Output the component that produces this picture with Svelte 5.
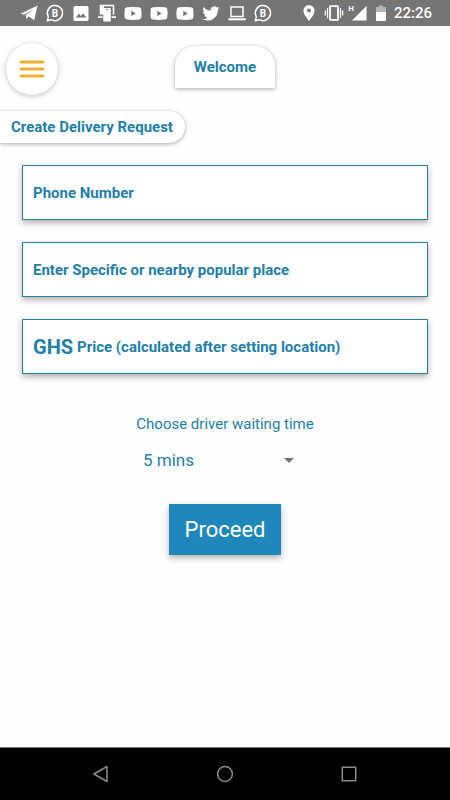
<script lang="ts">
	let phone = $state('');
	let place = $state('');
	let price = $state('');
	let waiting = $state('5');

	const waitingTimes = ['5', '10', '15', '20', '30'];
	const notifications = ['telegram', 'business', 'image', 'cast', 'video', 'video', 'video', 'twitter', 'laptop', 'business'];
</script>

<div class="screen">
	<div class="status">
		<div class="notifications">
			{#each notifications as icon}
				<svg viewBox="0 0 18 18" aria-hidden="true">
					{#if icon === 'telegram'}
						<path d="M0.5 9.8 17.5 1.5 14.3 16.3 8.7 12.3 6.5 15 5.8 11.2 13.5 4.8 4.3 10.8Z" fill="#fff" />
					{:else if icon === 'business'}
						<path d="M1.2 16.8 2.4 12.9A7.6 7.6 0 1 1 5.3 15.7Z" fill="none" stroke="#fff" stroke-width="1.5" stroke-linejoin="round" />
						<text x="9" y="12.8" class="letter">B</text>
					{:else if icon === 'image'}
						<path fill-rule="evenodd" d="M3 2h12a1.5 1.5 0 0 1 1.5 1.5v12A1.5 1.5 0 0 1 15 17H3a1.5 1.5 0 0 1-1.5-1.5v-12A1.5 1.5 0 0 1 3 2ZM3.8 13.5h10.4L11.2 9.2 9 12 6.8 9.8Z" fill="#fff" />
					{:else if icon === 'cast'}
						<path d="M2.5 10.5V1.5h13v9" fill="none" stroke="#fff" stroke-width="1.6" />
						<path d="M2.5 1.5H6v9H2.5ZM0 12.2h4.4V14H0ZM13.6 12.2H18V14h-4.4Z" fill="#fff" />
						<path fill-rule="evenodd" d="M6.4 4h5.2a1.2 1.2 0 0 1 1.2 1.2v11.1a1.2 1.2 0 0 1-1.2 1.2H6.4a1.2 1.2 0 0 1-1.2-1.2V5.2A1.2 1.2 0 0 1 6.4 4ZM7.8 5.2v0.9h2.4v-0.9Z" fill="#fff" />
					{:else if icon === 'video'}
						<path fill-rule="evenodd" d="M3 3.2Q9 2.6 15 3.2 17.3 3.4 17.4 6 17.7 9.5 17.4 13 17.3 15.4 15 15.6 9 16.2 3 15.6 0.7 15.4 0.6 13 0.3 9.5 0.6 6 0.7 3.4 3 3.2ZM7.3 6.8v5.2L11.8 9.4Z" fill="#fff" />
					{:else if icon === 'twitter'}
						<path d="M17.5 4.1a7 7 0 0 1-2 .6 3.5 3.5 0 0 0 1.5-2 7 7 0 0 1-2.2.9 3.5 3.5 0 0 0-6 3.2A10 10 0 0 1 1.6 3.1a3.5 3.5 0 0 0 1.1 4.7 3.5 3.5 0 0 1-1.6-.4 3.5 3.5 0 0 0 2.8 3.5 3.5 3.5 0 0 1-1.6 0 3.5 3.5 0 0 0 3.3 2.5 7 7 0 0 1-5.2 1.5 10 10 0 0 0 15.4-8.9 7 7 0 0 0 1.7-1.9Z" fill="#fff" />
					{:else}
						<path d="M3 3h12v9.5H3Z" fill="none" stroke="#fff" stroke-width="1.5" />
						<path d="M0.3 14.3h17.4v2H0.3Z" fill="#fff" />
					{/if}
				</svg>
			{/each}
		</div>
		<div class="system">
			<svg viewBox="0 0 18 18" aria-hidden="true">
				<path fill-rule="evenodd" d="M9 1a5.6 5.6 0 0 0-5.6 5.6C3.4 10.8 9 17 9 17s5.6-6.2 5.6-10.4A5.6 5.6 0 0 0 9 1Zm0 3.6a2 2 0 1 1 0 4 2 2 0 0 1 0-4Z" fill="#fff" />
			</svg>
			<svg viewBox="0 0 18 18" aria-hidden="true">
				<path d="M5 2.2h8v13.6H5Z" fill="none" stroke="#fff" stroke-width="1.8" stroke-linejoin="round" />
				<path d="M2.5 4v10M15.5 4v10M0.3 6.5v5M17.7 6.5v5" stroke="#fff" stroke-width="1.2" />
			</svg>
			<svg viewBox="0 0 18 18" aria-hidden="true">
				<path d="M16.5 2v14.5H2Z" fill="#fff" />
				<text x="1" y="7" class="letter small">H</text>
			</svg>
			<svg class="battery" viewBox="0 0 12 18" aria-hidden="true">
				<path d="M1 3h3V1.5h4V3h3v5H1Z" fill="#b5b5b5" />
				<path d="M1 8h10v9H1Z" fill="#fff" />
			</svg>
			<span class="clock">22:26</span>
		</div>
	</div>

	<header>
		<button class="menu" aria-label="Menu">
			<svg viewBox="0 0 26 20" aria-hidden="true">
				<path d="M2 3h22M2 10h22M2 17h22" stroke="#ebb12c" stroke-width="3" stroke-linecap="round" />
			</svg>
		</button>
		<h1>Welcome</h1>
	</header>

	<main>
		<h2>Create Delivery Request</h2>

		<form onsubmit={(e) => e.preventDefault()}>
			<div class="field">
				<input type="tel" aria-label="Phone Number" placeholder="Phone Number" bind:value={phone} />
			</div>
			<div class="field">
				<input type="text" aria-label="Enter Specific or nearby popular place" placeholder="Enter Specific or nearby popular place" bind:value={place} />
			</div>
			<div class="field">
				<label for="price">GHS</label>
				<input id="price" type="text" placeholder="Price (calculated after setting location)" bind:value={price} />
			</div>

			<div class="waiting">
				<label for="waiting">Choose driver waiting time</label>
				<div class="picker">
					<select id="waiting" bind:value={waiting}>
						{#each waitingTimes as time}
							<option value={time}>{time} mins</option>
						{/each}
					</select>
					<svg viewBox="0 0 10 5" aria-hidden="true">
						<path d="M0 0h10L5 5Z" fill="#757575" />
					</svg>
				</div>
			</div>

			<button class="proceed" type="submit">Proceed</button>
		</form>
	</main>

	<nav>
		<button aria-label="Back">
			<svg viewBox="0 0 18 18"><path d="M15 1.5v15L2 9Z" /></svg>
		</button>
		<button aria-label="Home">
			<svg viewBox="0 0 18 18"><circle cx="9" cy="9" r="7.4" /></svg>
		</button>
		<button aria-label="Recent apps">
			<svg viewBox="0 0 18 18"><path d="M2.3 2.3h13.4v13.4H2.3Z" /></svg>
		</button>
	</nav>
</div>

<style>
	:global(body) {
		margin: 0;
		background: #fefefe;
	}
	.screen {
		display: flex;
		flex-direction: column;
		min-height: 100vh;
		font-family: Roboto, "Liberation Sans", sans-serif;
		color: #1f7fa8;
	}
	button, input, select {
		font-family: inherit;
		color: inherit;
		border: none;
		background: none;
		padding: 0;
		margin: 0;
	}
	svg {
		display: block;
	}

	.status {
		display: flex;
		justify-content: space-between;
		align-items: center;
		height: 26px;
		padding: 0 18px 0 20px;
		background: #757575;
		color: white;
	}
	.status svg {
		width: 18px;
		height: 18px;
		overflow: visible;
	}
	.status svg.battery {
		width: 12px;
	}
	.notifications {
		display: flex;
		gap: 8px;
	}
	.system {
		display: flex;
		align-items: center;
		gap: 7px;
	}
	.letter {
		font-size: 10px;
		font-weight: 700;
		text-anchor: middle;
		fill: white;
	}
	.small {
		font-size: 8px;
	}
	.clock {
		font-size: 15px;
		font-weight: 500;
	}

	header {
		display: grid;
		grid-template-columns: 1fr auto 1fr;
		align-items: start;
		padding: 17px 6px 0;
	}
	.menu {
		display: flex;
		align-items: center;
		justify-content: center;
		width: 52px;
		height: 52px;
		border-radius: 50%;
		background: white;
		box-shadow: 0 1px 5px rgba(0, 0, 0, 0.25);
	}
	.menu svg {
		width: 26px;
		height: 20px;
	}
	h1, h2 {
		margin: 0;
		font-size: 15px;
		font-weight: 700;
		background: white;
	}
	h1 {
		margin-top: 3px;
		padding: 0 19px;
		line-height: 42px;
		border-radius: 20px 20px 0 0;
		box-shadow: 0 1px 4px rgba(0, 0, 0, 0.35);
	}

	main {
		flex: 1;
		padding-top: 16px;
	}
	h2 {
		width: fit-content;
		padding: 0 12px 0 11px;
		line-height: 32px;
		border-radius: 0 16px 16px 0;
		box-shadow: 0 1px 4px rgba(0, 0, 0, 0.35);
	}
	form {
		display: flex;
		flex-direction: column;
		gap: 22px;
		padding: 22px;
	}
	.field {
		display: flex;
		align-items: center;
		gap: 4px;
		box-sizing: border-box;
		height: 55px;
		padding: 0 10px;
		border: 1px solid #2b7f9f;
		background: white;
		box-shadow: 0 3px 6px rgba(0, 0, 0, 0.3);
	}
	.field label {
		font-size: 20px;
		font-weight: 700;
	}
	.field input {
		flex: 1;
		min-width: 0;
		height: 100%;
		font-size: 15px;
		font-weight: 700;
		outline: none;
	}
	.field input::placeholder {
		color: inherit;
		opacity: 1;
	}

	.waiting {
		display: flex;
		flex-direction: column;
		align-items: center;
		gap: 12px;
		padding-top: 18px;
		font-size: 15px;
		line-height: 20px;
	}
	.picker {
		display: flex;
		align-items: center;
		width: 164px;
	}
	select {
		flex: 1;
		height: 28px;
		font-size: 17px;
		appearance: none;
	}
	.picker svg {
		width: 10px;
		height: 5px;
		margin-right: 13px;
		pointer-events: none;
	}
	.proceed {
		align-self: center;
		margin-top: 8px;
		padding: 0 16px;
		font-size: 22px;
		line-height: 51px;
		color: white;
		background: #1f87ba;
		box-shadow: 0 3px 6px rgba(0, 0, 0, 0.3);
	}

	nav {
		display: flex;
		justify-content: center;
		gap: 106px;
		padding: 17px 0;
		border-top: 1px solid #777;
		background: black;
	}
	nav svg {
		width: 18px;
		height: 18px;
		fill: none;
		stroke: #8c8c8c;
		stroke-width: 1.5;
		stroke-linejoin: round;
	}
</style>
